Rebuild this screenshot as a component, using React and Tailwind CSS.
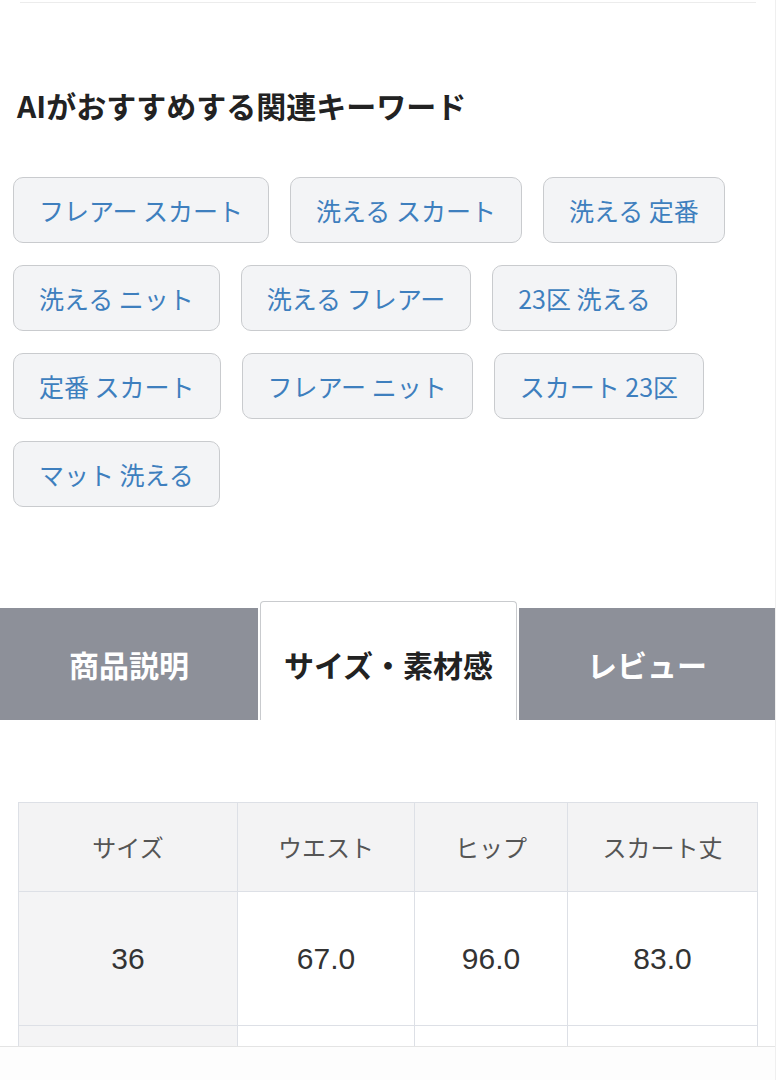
import React from 'react';

const keywords = [
  'フレアー スカート',
  '洗える スカート',
  '洗える 定番',
  '洗える ニット',
  '洗える フレアー',
  '23区 洗える',
  '定番 スカート',
  'フレアー ニット',
  'スカート 23区',
  'マット 洗える',
];

const columns = [
  { label: 'サイズ', width: 'w-[219px]' },
  { label: 'ウエスト', width: 'w-[177px]' },
  { label: 'ヒップ', width: 'w-[153px]' },
  { label: 'スカート丈', width: 'w-[190px]' },
];

// second row sits under the bottom bar, only its top edge shows
const rows = [
  ['36', '67.0', '96.0', '83.0'],
  ['', '', '', ''],
];

const jp = "font-['Noto_Sans_CJK_JP','Noto_Sans',sans-serif]";

export default function App() {
  return (
    <div className={`w-[776px] bg-white border-r border-[#efefef] ${jp}`}>
      <div className="h-[1046px] overflow-hidden">
        <div className="h-[3px] ml-[20px] mr-[19px] border-b border-[#ececec]" />

        {/* Keywords */}
        <h2 className="mt-[84px] pl-[17px] text-[30px] leading-[36px] font-bold text-[#222]">
          AIがおすすめする関連キーワード
        </h2>

        <div className="mt-[54px] pl-[13px] pr-[20px] flex flex-wrap gap-x-[21px] gap-y-[22px]">
          {keywords.map((kw) => (
            <button
              key={kw}
              className="px-[25px] py-[14px] rounded-[10px] border border-[#c9cbce] bg-[#f3f4f6] text-[25px] leading-[36px] text-[#3e7fbe]"
            >
              {kw}
            </button>
          ))}
        </div>

        {/* Tabs */}
        <div className="mt-[94px] flex items-end gap-[2px]">
          <div className="w-[258px] h-[112px] bg-[#8d9099] flex items-center justify-center text-[30px] font-bold text-white">
            商品説明
          </div>
          <div className="w-[257px] h-[119px] bg-white border border-b-0 border-[#c9cbce] rounded-t-[4px] flex items-center justify-center pt-[6px] text-[30px] font-bold text-[#222]">
            サイズ・素材感
          </div>
          <div className="flex-1 h-[112px] bg-[#8d9099] flex items-center justify-center text-[30px] font-bold text-white">
            レビュー
          </div>
        </div>

        {/* Size table */}
        <div className="mt-[82px] ml-[18px]">
          <table className="border-collapse">
            <thead>
              <tr>
                {columns.map((c) => (
                  <th
                    key={c.label}
                    className={`${c.width} h-[89px] bg-[#f3f3f4] border border-[#dde0e6] text-[24px] font-normal text-[#555]`}
                  >
                    {c.label}
                  </th>
                ))}
              </tr>
            </thead>
            <tbody>
              {rows.map((r, i) => (
                <tr key={i}>
                  {r.map((v, j) => (
                    <td
                      key={j}
                      className={`h-[134px] border border-[#dde0e6] text-center text-[30px] text-[#333] font-['Liberation_Sans',Arial,sans-serif] ${
                        j === 0 ? 'bg-[#f4f4f5]' : 'bg-white'
                      }`}
                    >
                      {v}
                    </td>
                  ))}
                </tr>
              ))}
            </tbody>
          </table>
        </div>
      </div>

      {/* Bottom bar */}
      <div className="h-[34px] bg-[#fdfdfd] border-t border-[#e4e4e4]" />
    </div>
  );
}
